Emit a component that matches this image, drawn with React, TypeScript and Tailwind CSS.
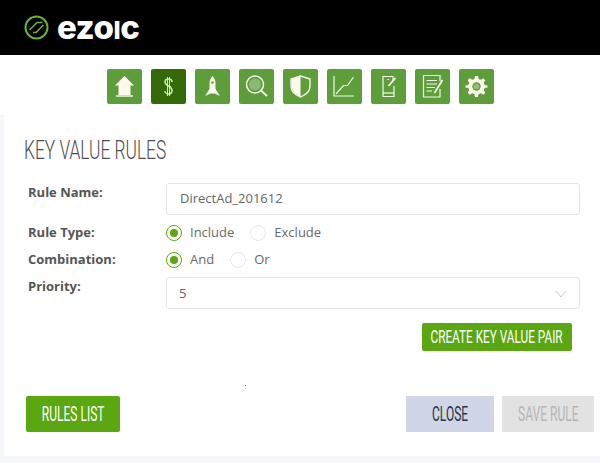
function NavIcon({ children, active }: { children: React.ReactNode; active?: boolean }) {
  return (
    <div
      className={`flex h-[35px] w-[35px] items-center justify-center rounded-[2px] ${
        active ? 'bg-[#336a07]' : 'bg-[#5e9e3a]'
      }`}
    >
      <svg width="35" height="35" viewBox="0 0 35 35" fill="none" stroke="#f4f8ee" strokeWidth="1">
        {children}
      </svg>
    </div>
  );
}

function Radio({ label, checked }: { label: string; checked?: boolean }) {
  return (
    <div className="flex items-center gap-2">
      <span
        className={`flex h-4 w-4 items-center justify-center rounded-full border bg-white ${
          checked ? 'border-[#5aa711]' : 'border-[#e8e8e8]'
        }`}
      >
        {checked && <span className="h-2 w-2 rounded-full bg-[#5aa711]" />}
      </span>
      <span className="text-[13px] text-[#6a6a6a]">{label}</span>
    </div>
  );
}

export default function App() {
  return (
    <div className="h-[463px] w-[600px] overflow-hidden bg-[#f4f6fa] font-['Open_Sans',sans-serif]">
      <header className="flex h-[55px] items-center bg-black pl-6">
        <svg width="25" height="25" viewBox="0 0 25 25" fill="none" stroke="#66b32e" strokeWidth="2">
          <circle cx="12.5" cy="12.5" r="11" />
          <path d="M5.5 15 L13 7.5 H18.5" strokeWidth="1.6" />
          <path d="M19.5 10 L12 17.5 H9" strokeWidth="1.6" />
        </svg>
        <span className="ml-2 font-['Inter',sans-serif] text-[33px] leading-none font-extrabold tracking-[-0.5px] text-white">
          ezo<span className="text-[25px] uppercase">i</span>c
        </span>
      </header>

      <div className="flex h-[60px] items-start justify-center gap-[9px] bg-white pt-[14px] pl-[1px]">
        <NavIcon>
          <path d="M17.5 7 L27 16.5 L23.5 16.5 L23.5 26 L11.5 26 L11.5 16.5 L8 16.5 Z" fill="#fdf9ee" stroke="none" />
          <path d="M9 27 H26" strokeWidth="1.5" />
        </NavIcon>
        <NavIcon active>
          <path d="M21 13 C21 11 19.5 10 17.5 10 C15 10 14 11.5 14 13 C14 15 15.5 16 17.5 17 C19.5 18 21 19 21 21.5 C21 23.5 19.5 25 17.5 25 C15.5 25 14 23.5 14 22" strokeWidth="1.5" stroke="#cdeec0" />
          <path d="M16.5 8 V27 M18.5 8 V27" stroke="#cdeec0" />
        </NavIcon>
        <NavIcon>
          <path d="M17.5 7 C20 10 20.5 12 20.5 15 L20.5 20 L25 27 L19.5 24.5 L15.5 24.5 L10 27 L14.5 20 L14.5 15 C14.5 12 15 10 17.5 7 Z" fill="#fdf9ee" stroke="none" />
          <circle cx="17.5" cy="13.5" r="1.2" fill="#5e9e3a" stroke="none" />
        </NavIcon>
        <NavIcon>
          <circle cx="16" cy="15.5" r="8.5" strokeWidth="1.5" />
          <circle cx="16" cy="15.5" r="6" fill="#fdf9ee" stroke="none" opacity="0.3" />
          <path d="M22 21.5 L28 27" strokeWidth="1.8" />
        </NavIcon>
        <NavIcon>
          <path d="M17.5 7 L27 10 V17 C27 22.5 22.5 26 17.5 28 C12.5 26 8 22.5 8 17 V10 Z" strokeWidth="1.4" />
          <path d="M17.5 7.5 L8.5 10.3 V17 C8.5 22 13 25.5 17.5 27.5 Z" fill="#fdf9ee" stroke="none" />
        </NavIcon>
        <NavIcon>
          <path d="M7 7 V27 H27" strokeWidth="1.2" />
          <path d="M9 25 L16.5 16.5 H20.5 L26.5 8" strokeWidth="1.2" />
        </NavIcon>
        <NavIcon>
          <path d="M22 12 V7.5 H12 V27.5 H23 V17" strokeWidth="1.2" />
          <path d="M12 24 H23" strokeWidth="1.2" />
          <path d="M17.5 17 L24.5 9" strokeWidth="1.8" />
          <path d="M16.5 10.5 H18" strokeWidth="1.2" />
        </NavIcon>
        <NavIcon>
          <path d="M25 12 V6.5 H8.5 V28 H25 V20" strokeWidth="1.2" />
          <path d="M11.5 11.5 H22 M11.5 15 H22 M11.5 18.5 H20 M11.5 22 H17" strokeWidth="1.2" />
          <path d="M19.5 24 L27.5 11" strokeWidth="1.8" />
        </NavIcon>
        <NavIcon>
          <path
            d="M16 7.5 H19 L19.6 10.4 L21.8 11.3 L24.3 9.7 L26.3 11.7 L24.7 14.2 L25.6 16.4 L28.5 17 V19 L25.6 19.6 L24.7 21.8 L26.3 24.3 L24.3 26.3 L21.8 24.7 L19.6 25.6 L19 28.5 H16 L15.4 25.6 L13.2 24.7 L10.7 26.3 L8.7 24.3 L10.3 21.8 L9.4 19.6 L6.5 19 V17 L9.4 16.4 L10.3 14.2 L8.7 11.7 L10.7 9.7 L13.2 11.3 L15.4 10.4 Z"
            fill="#fdf9ee"
            stroke="none"
            transform="translate(0 -0.5)"
          />
          <circle cx="17.5" cy="17.5" r="4.2" fill="#5e9e3a" stroke="none" />
          <circle cx="17.5" cy="17.5" r="2.8" fill="#fdf9ee" stroke="none" opacity="0.35" />
        </NavIcon>
      </div>

      <main className="relative ml-[4px] h-[341px] bg-white pt-[19px]">
        <h1 className="ml-5 origin-left scale-x-[0.667] font-['Roboto',sans-serif] text-[26px] leading-[32px] font-light whitespace-nowrap text-[#4d4d4d]">
          KEY VALUE RULES
        </h1>

        <div className="mt-[17px] mr-5 ml-6 grid grid-cols-[138px_1fr] text-[13px]">
          <label className="leading-[18px] font-bold text-[#555]">Rule Name:</label>
          <div className="flex h-8 items-center rounded-[3px] border border-[#e6e6e6] pl-[13px] text-[#666]">DirectAd_201612</div>

          <label className="mt-[9px] leading-[16px] font-bold text-[#555]">Rule Type:</label>
          <div className="mt-[9px] flex h-[18px] items-center gap-4">
            <Radio label="Include" checked />
            <Radio label="Exclude" />
          </div>

          <label className="mt-[9px] leading-[16px] font-bold text-[#555]">Combination:</label>
          <div className="mt-[9px] flex h-[18px] items-center gap-4">
            <Radio label="And" checked />
            <Radio label="Or" />
          </div>

          <label className="mt-[8px] leading-[18px] font-bold text-[#555]">Priority:</label>
          <div className="mt-[8px] flex h-8 items-center justify-between rounded-[3px] border border-[#e6e6e6] px-[12px] pt-px text-[#666]">
            5
            <svg width="12" height="8" viewBox="0 0 12 8" fill="none" stroke="#c8c8c8">
              <path d="M1 1 L6 7 L11 1" />
            </svg>
          </div>
        </div>

        <div className="mt-[14px] flex justify-end pr-7">
          <button className="flex h-7 w-[150px] items-center justify-center rounded-[2px] bg-[#5aa711] font-['Roboto',sans-serif] text-[19px] text-white">
            <span className="shrink-0 scale-x-[0.62] whitespace-nowrap">CREATE KEY VALUE PAIR</span>
          </button>
        </div>

        <span className="absolute top-[270px] left-[241px] h-px w-px bg-[#777]" />

        <div className="mt-[45px] flex items-start pl-[22px] font-['Roboto',sans-serif] text-[20px]">
          <button className="flex h-9 w-[94px] items-center justify-center rounded-[2px] bg-[#5aa711] text-white">
            <span className="shrink-0 scale-x-[0.6] whitespace-nowrap">RULES LIST</span>
          </button>
          <button className="ml-[286px] flex h-9 w-[88px] items-center justify-center bg-[#d0d6e7] text-[#2b3342]">
            <span className="shrink-0 scale-x-[0.6] whitespace-nowrap">CLOSE</span>
          </button>
          <button className="ml-2 flex h-9 w-[92px] items-center justify-center bg-[#e2e2e2] text-[#b5b5b5]">
            <span className="shrink-0 scale-x-[0.6] whitespace-nowrap">SAVE RULE</span>
          </button>
        </div>
      </main>
    </div>
  );
}
